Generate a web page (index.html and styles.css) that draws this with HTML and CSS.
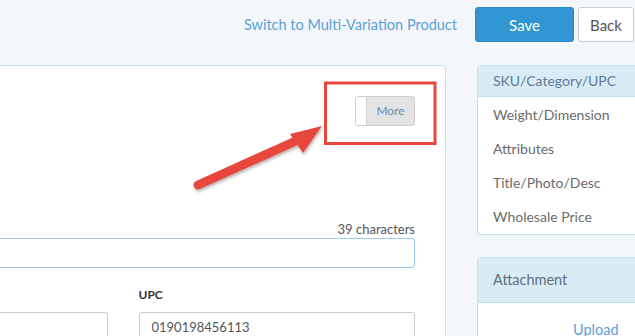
FILE: index.html
```html
<!DOCTYPE html>
<html lang="en">
<head>
  <meta charset="UTF-8" />
  <meta name="viewport" content="width=device-width, initial-scale=1.0" />
  <title>Edit Product</title>
  <link rel="stylesheet" href="styles.css">
</head>
<body>
  <div class="topbar">
    <a class="switch-link" href="#">Switch to Multi-Variation Product</a>
    <button class="btn btn-save">Save</button>
    <button class="btn btn-back">Back</button>
  </div>

  <div class="layout">
    <div class="main-panel">
      <div class="toggle-row">
        <div class="toggle">
          <span class="knob"></span>
          <span class="toggle-label">More</span>
        </div>
      </div>

      <div class="counter">39 characters</div>
      <input class="field field-title" type="text" value="" />

      <div class="form-row">
        <div class="form-col">
          <input class="field" type="text" value="" />
        </div>
        <div class="form-col">
          <label class="label">UPC</label>
          <input class="field" type="text" value="0190198456113" />
        </div>
      </div>
    </div>

    <div class="sidebar">
      <div class="side-panel">
        <div class="side-head">SKU/Category/UPC</div>
        <ul class="side-list">
          <li>Weight/Dimension</li>
          <li>Attributes</li>
          <li>Title/Photo/Desc</li>
          <li>Wholesale Price</li>
        </ul>
      </div>

      <div class="side-panel attach">
        <div class="side-head attach-head">Attachment</div>
        <div class="attach-body">
          <a href="#">Upload</a>
        </div>
      </div>
    </div>
  </div>

  <!-- annotation drawn over the screenshot -->
  <svg class="annotation" width="635" height="336" viewBox="0 0 635 336">
    <defs>
      <filter id="shade" x="-20%" y="-20%" width="140%" height="140%">
        <feDropShadow dx="1" dy="2" stdDeviation="1.5" flood-color="#000" flood-opacity="0.3"/>
      </filter>
    </defs>
    <rect x="325.5" y="83" width="109.5" height="60.5" fill="none" stroke="#e8473e" stroke-width="3"/>
    <g filter="url(#shade)" fill="#e8473e">
      <line x1="198" y1="185" x2="298" y2="140" stroke="#e8473e" stroke-width="9" stroke-linecap="round"/>
      <polygon points="322,126 290,134 303,153"/>
    </g>
  </svg>
</body>
</html>
```

FILE: styles.css
```css
:root {
  --bg: #f3f7fa;
  --link: #5b9fd8;
  --primary: #3296d2;
  --panel-border: #bde3ee;
  --head-bg: #d9ecf6;
  --text: #666;
}
body {
  margin: 0;
  height: 336px;
  overflow: hidden;
  background: var(--bg);
  font-family: Lato, 'Open Sans', sans-serif;
  color: var(--text);
  position: relative;
}
.topbar {
  height: 58px;
  padding-top: 7px;
  display: flex;
  justify-content: flex-end;
  align-items: flex-start;
  padding-right: 1px;
}
.switch-link {
  color: var(--link);
  text-decoration: none;
  font-size: 14.5px;
  line-height: 35px;
  margin-right: 18px;
}
.btn {
  height: 35px;
  border-radius: 3px;
  font-family: inherit;
  font-size: 15px;
  cursor: pointer;
}
.btn-save {
  width: 99px;
  background: var(--primary);
  border: 1px solid #2a88c2;
  color: #fff;
  margin-right: 4px;
}
.btn-back {
  width: 56px;
  background: #fff;
  border: 1px solid #ccc;
  color: #555;
}
.layout {
  display: grid;
  grid-template-columns: 646px 168px;
  column-gap: 31px;
  margin-left: -200px;
  align-items: start;
}
.main-panel {
  background: #fff;
  border: 1px solid var(--panel-border);
  border-radius: 4px;
  padding: 30px 30px 40px;
  min-height: 300px;
}
.toggle-row {
  display: flex;
  justify-content: flex-end;
}
.toggle {
  display: flex;
  width: 60px;
  height: 30px;
  box-sizing: border-box;
  border: 1px solid #cfcfcf;
  border-radius: 3px;
  background: #e3e3e3;
  overflow: hidden;
}
.knob {
  width: 10px;
  background: #fff;
  border-right: 1px solid #cfcfcf;
}
.toggle-label {
  flex: 1;
  text-align: center;
  font-size: 12px;
  line-height: 28px;
  color: #6f8aa5;
}
.counter {
  margin-top: 95px;
  text-align: right;
  font-size: 13px;
  line-height: 16px;
  color: #555;
}
.field {
  display: block;
  width: 100%;
  box-sizing: border-box;
  height: 30px;
  border: 1px solid #cccccc;
  border-radius: 3px;
  padding: 0 12px;
  font-family: inherit;
  font-size: 13px;
  color: #555;
  background: #fff;
}
.field-title {
  margin-top: 1px;
  border-color: #9ccbec;
}
.form-row {
  display: grid;
  grid-template-columns: 1fr 1fr;
  column-gap: 31px;
  align-items: end;
  margin-top: 19px;
}
.label {
  display: block;
  font-size: 12px;
  font-weight: bold;
  color: #333;
  line-height: 16px;
  margin-bottom: 9px;
}
.side-panel {
  background: #fff;
  border: 1px solid var(--panel-border);
  border-radius: 4px;
  overflow: hidden;
}
.side-head {
  background: var(--head-bg);
  height: 30px;
  line-height: 30px;
  padding-left: 15px;
  font-size: 14px;
  color: #5d7a96;
  border-bottom: 1px solid var(--panel-border);
}
.side-list {
  list-style: none;
  margin: 0;
  padding: 1px 0 0;
}
.side-list li {
  height: 34px;
  line-height: 34px;
  padding-left: 15px;
  font-size: 14px;
  color: #6b6b6b;
}
.attach {
  margin-top: 22px;
}
.attach-head {
  height: 44px;
  line-height: 44px;
  font-size: 14.5px;
  color: #5d6f80;
}
.attach-body {
  padding: 16px 0 40px 95px;
}
.attach-body a {
  color: var(--link);
  text-decoration: none;
  font-size: 14.5px;
}
.annotation {
  position: absolute;
  left: 0;
  top: 0;
  pointer-events: none;
}
```
